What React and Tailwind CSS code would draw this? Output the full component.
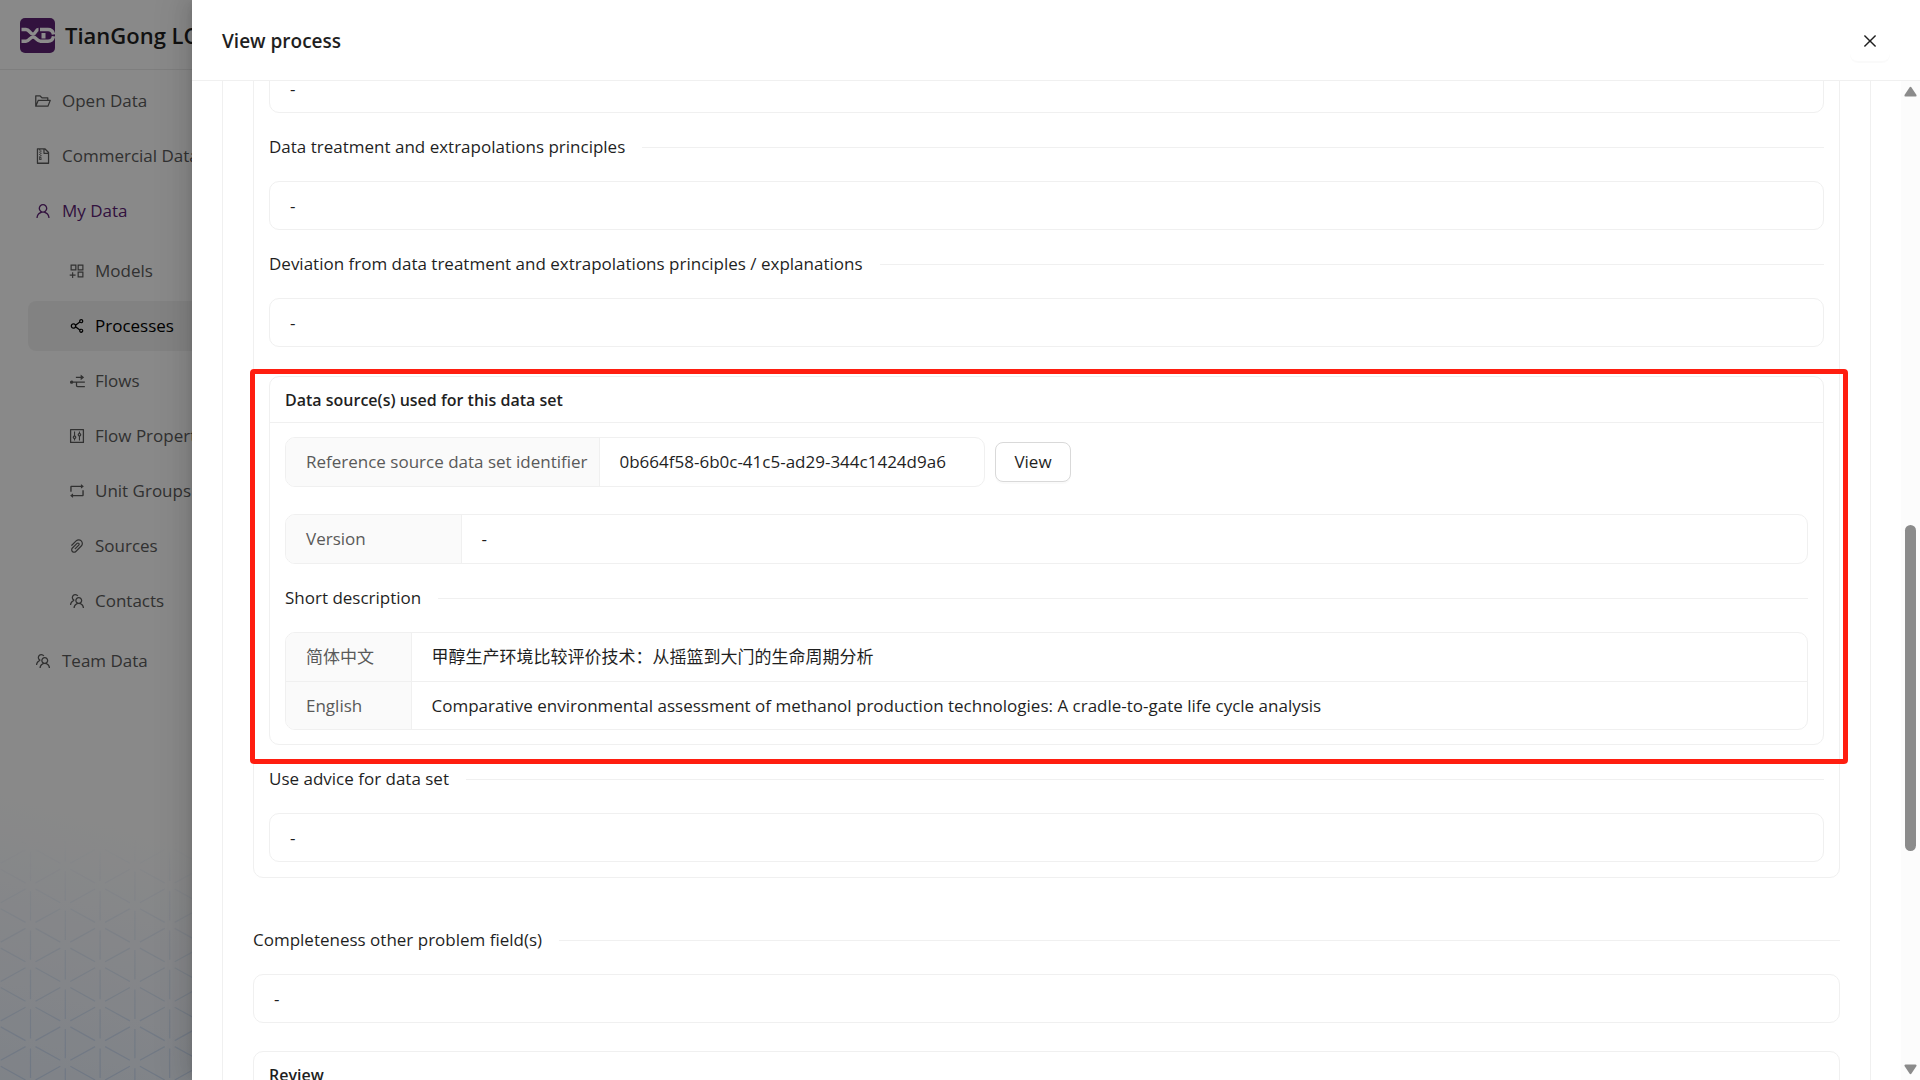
import {
  AiOutlineAppstoreAdd,
  AiOutlineClose,
  AiOutlineControl,
  AiOutlineFileZip,
  AiOutlineFolderOpen,
  AiOutlineNodeExpand,
  AiOutlinePaperClip,
  AiOutlineRetweet,
  AiOutlineShareAlt,
  AiOutlineTeam,
  AiOutlineUser,
} from "react-icons/ai";

const myDataItems = [
  { label: "Models", icon: AiOutlineAppstoreAdd },
  { label: "Processes", icon: AiOutlineShareAlt, active: true },
  { label: "Flows", icon: AiOutlineNodeExpand },
  { label: "Flow Properties", icon: AiOutlineControl },
  { label: "Unit Groups", icon: AiOutlineRetweet },
  { label: "Sources", icon: AiOutlinePaperClip },
  { label: "Contacts", icon: AiOutlineTeam },
];

const Logo = () => (
  <svg viewBox="0 0 35 35" className="size-[35px] shrink-0">
    <rect width="35" height="35" rx="5" fill="#5c2272" />
    <g fill="none" stroke="#fff" strokeWidth="3.4">
      <path d="M1.5 11.5H6c3.500 0 4 4.600 7 4.600s2.500-4.600 5.500-4.600" />
      <path d="M20 11.500h8c3 0 5 2 5.500 5" />
      <path d="M1.500 23.200H6c3.500 0 4-4.200 7-4.200s4 4.200 7.500 4.200H28c3 0 5-2 5.500-5" />
    </g>
    <rect x="21.500" y="15" width="4" height="5.500" fill="#fff" />
  </svg>
);

// Triangle grid that fades in towards the bottom of the page
const GridBackdrop = () => {
  const dx = 34.8;
  const dy = 39.4;
  const lines = [];
  for (let col = -1; col < 12; col++) {
    for (let row = 0; row < 13; row++) {
      const x = 30.5 + col * dx;
      const y = 9 + row * dy + (col % 2 ? dy / 2 : 0);
      lines.push(`M${x} ${y + 5}V${y + dy - 5}`);
      lines.push(`M${x + 5} ${y + 3}L${x + dx - 5} ${y + dy / 2 - 3}`);
      lines.push(`M${x + 5} ${y - 3}L${x + dx - 5} ${y - dy / 2 + 3}`);
    }
  }
  return (
    <svg className="absolute bottom-0 left-0 h-[400px] w-[400px]" viewBox="0 0 400 400">
      <defs>
        <linearGradient id="fade" x1="0" y1="0" x2="0" y2="1">
          <stop offset="0.4" stopColor="#fff" stopOpacity="0" />
          <stop offset="1" stopColor="#fff" stopOpacity="1" />
        </linearGradient>
        <linearGradient id="tint" x1="0" y1="1" x2="0.2" y2="0.3">
          <stop offset="0" stopColor="#e8eef8" />
          <stop offset="1" stopColor="#e8eef8" stopOpacity="0" />
        </linearGradient>
        <mask id="grid-mask">
          <rect width="400" height="400" fill="url(#fade)" />
        </mask>
      </defs>
      <rect width="400" height="400" fill="url(#tint)" />
      <path d={lines.join("")} stroke="#cbdaf0" strokeWidth="1.2" mask="url(#grid-mask)" />
    </svg>
  );
};

const MenuLink = ({ item, nested, className = "text-[#595959]" }) => (
  <a
    href="#"
    className={`flex h-[50px] items-center rounded-lg ${nested ? "gap-[9px] pl-10" : "gap-[10px] pl-[6px]"} ${
      item.active ? "bg-black/5 text-black" : className
    }`}
  >
    <item.icon size={18} className="shrink-0" />
    <span className="whitespace-nowrap">{item.label}</span>
  </a>
);

const Sidebar = () => (
  <aside className="relative h-full w-80 bg-[#fafafa]">
    <GridBackdrop />
    <div className="relative flex h-[70px] items-center gap-[10px] border-b border-[#e6e6e6] pt-[2px] pl-5">
      <Logo />
      <h1 className="text-[22px] font-semibold whitespace-nowrap">TianGong LCA</h1>
    </div>
    <nav className="relative flex flex-col gap-[5px] pt-[6px] pl-7">
      <MenuLink item={{ label: "Open Data", icon: AiOutlineFolderOpen }} />
      <MenuLink item={{ label: "Commercial Data", icon: AiOutlineFileZip }} />
      <MenuLink item={{ label: "My Data", icon: AiOutlineUser }} className="text-[#5c2272]" />
      <div className="flex flex-col gap-[5px] py-[5px]">
        {myDataItems.map((item) => (
          <MenuLink key={item.label} item={item} nested />
        ))}
      </div>
      <MenuLink item={{ label: "Team Data", icon: AiOutlineTeam }} />
    </nav>
  </aside>
);

const Divider = ({ children }) => (
  <div className="flex h-[68px] items-center gap-[17px]">
    <span className="whitespace-nowrap">{children}</span>
    <div className="h-px flex-1 bg-[#f0f0f0]" />
  </div>
);

const TextBox = ({ children }) => (
  <p className="flex h-[49px] items-center rounded-[10px] border border-[#f0f0f0] px-5">{children}</p>
);

const Descriptions = ({ rows, className = "", labelWidth = "" }) => (
  <div className={`overflow-hidden rounded-[10px] border border-[#f0f0f0] ${className}`}>
    <table className="w-full">
      <tbody>
        {rows.map(([label, value]) => (
          <tr key={label} className="border-[#f0f0f0] not-last:border-b">
            <th
              scope="row"
              className={`h-12 border-r border-[#f0f0f0] bg-[#fafafa] pr-2 pl-5 text-left font-normal whitespace-nowrap text-[#595959] ${labelWidth}`}
            >
              {label}
            </th>
            <td className="h-12 px-5">{value}</td>
          </tr>
        ))}
      </tbody>
    </table>
  </div>
);

const CardHeader = ({ children }) => (
  <h3 className="flex h-[46px] items-center border-b border-[#f0f0f0] px-[15px] text-[16px] font-semibold">
    {children}
  </h3>
);

const DataSourceCard = () => (
  <section className="relative mt-[29px] rounded-[10px] border border-[#f0f0f0]">
    <CardHeader>Data source(s) used for this data set</CardHeader>
    <div className="px-[15px] py-[14px]">
      <div className="flex items-center gap-[10px]">
        <Descriptions
          className="w-[700px]"
          labelWidth="w-[313px]"
          rows={[["Reference source data set identifier", "0b664f58-6b0c-41c5-ad29-344c1424d9a6"]]}
        />
        <button className="h-10 w-[76px] rounded-lg border border-[#d9d9d9] bg-white shadow-[0_2px_0_rgba(0,0,0,0.02)]">
          View
        </button>
      </div>
      <Descriptions className="mt-[27px]" labelWidth="w-[175px]" rows={[["Version", "-"]]} />
      <Divider>Short description</Divider>
      <Descriptions
        labelWidth="w-[125px]"
        rows={[
          ["简体中文", "甲醇生产环境比较评价技术：从摇篮到大门的生命周期分析"],
          [
            "English",
            "Comparative environmental assessment of methanol production technologies: A cradle-to-gate life cycle analysis",
          ],
        ]}
      />
    </div>
    {/* Highlight frame */}
    <div className="pointer-events-none absolute -top-2 -right-[25px] -bottom-5 -left-5 rounded-[4px] border-5 border-[#ff1e10]" />
  </section>
);

const Scrollbar = () => (
  <div className="flex w-[19px] shrink-0 flex-col items-center bg-[#fcfcfc] py-[5px]">
    <svg viewBox="0 0 13 11" className="h-[11px] w-[13px]" fill="#8b8b8b">
      <path d="M5.500 1.500q1-1.500 2 0l5 7.500q.5 1.500-1 1.500h-10q-1.500 0-1-1.500z" />
    </svg>
    <div className="flex-[428]" />
    <div className="w-[11px] flex-[327] rounded-full bg-[#8b8b8b]" />
    <div className="flex-[213]" />
    <svg viewBox="0 0 13 11" className="h-[11px] w-[13px]" fill="#8b8b8b">
      <path d="M5.500 9.500q1 1.500 2 0l5-7.500q.5-1.500-1-1.500h-10q-1.500 0-1 1.500z" />
    </svg>
  </div>
);

const ProcessDrawer = () => (
  <div
    role="dialog"
    aria-label="View process"
    className="absolute inset-y-0 right-0 flex w-9/10 flex-col bg-white shadow-[-6px_0_16px_rgba(0,0,0,0.08),-3px_0_6px_-4px_rgba(0,0,0,0.12),-9px_0_28px_8px_rgba(0,0,0,0.05)]"
  >
    <header className="flex h-[81px] shrink-0 items-center justify-between border-b border-[#f0f0f0] px-[30px] pt-[2px]">
      <h2 className="text-[19px] font-semibold">View process</h2>
      <button
        aria-label="Close"
        className="flex size-10 items-center justify-center rounded-lg shadow-[0_2px_0_rgba(0,0,0,0.02)]"
      >
        <AiOutlineClose size={18} />
      </button>
    </header>

    <div className="flex min-h-0 flex-1">
      <div className="min-w-0 flex-1 overflow-hidden px-[30px]">
        {/* Scrolled content, its top sits behind the header */}
        <div className="-mt-10 rounded-[10px] border border-[#f0f0f0] px-[30px]">
          <section className="rounded-[10px] border border-[#f0f0f0] px-[15px] pt-[21px] pb-[15px]">
            <TextBox>-</TextBox>
            <Divider>Data treatment and extrapolations principles</Divider>
            <TextBox>-</TextBox>
            <Divider>Deviation from data treatment and extrapolations principles / explanations</Divider>
            <TextBox>-</TextBox>
            <DataSourceCard />
            <Divider>Use advice for data set</Divider>
            <TextBox>-</TextBox>
          </section>
          <div className="mt-7">
            <Divider>Completeness other problem field(s)</Divider>
            <TextBox>-</TextBox>
          </div>
          <section className="mt-7 rounded-[10px] border border-[#f0f0f0] pb-20">
            <CardHeader>Review</CardHeader>
          </section>
        </div>
      </div>
      <Scrollbar />
    </div>
  </div>
);

const App = () => (
  <div className="relative h-screen overflow-hidden bg-[#fafafa] font-['Open_Sans','Noto_Sans_CJK_SC',sans-serif] text-[17px] text-[#1f1f1f]">
    <Sidebar />
    <div className="absolute inset-0 bg-black/45" />
    <ProcessDrawer />
  </div>
);

export default App;
